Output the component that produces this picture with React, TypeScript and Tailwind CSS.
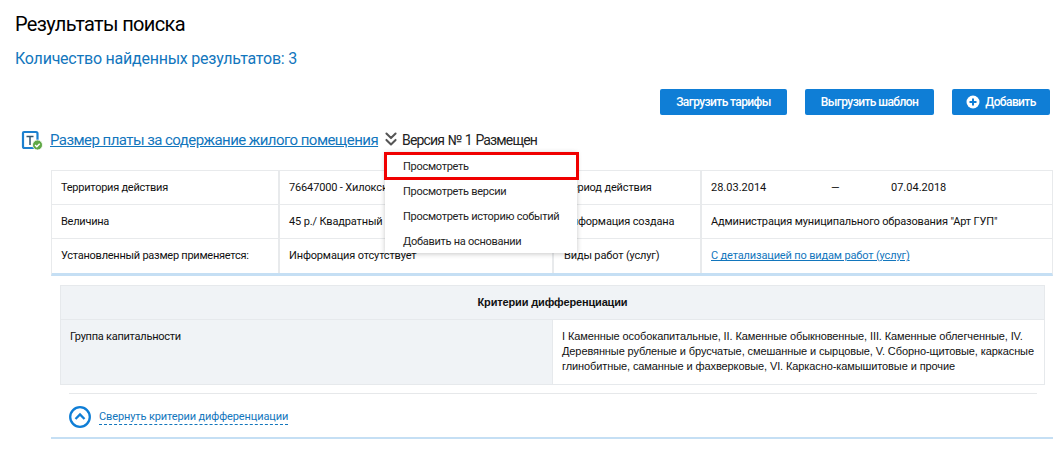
import { ChevronsDown } from "lucide-react";

const rows = [
  ["Территория действия", "76647000 - Хилокский муниципальный район", "Период действия"],
  ["Величина", "45 р./ Квадратный метр общей площади", "Информация создана"],
  ["Установленный размер применяется:", "Информация отсутствует", "Виды работ (услуг)"],
];

function TariffIcon() {
  return (
    <svg width="22" height="21" viewBox="0 0 22 21" className="shrink-0">
      <path d="M3 2h12a1.500 1.500 0 0 1 1.500 1.500V14l-4 4H3.500A1.500 1.500 0 0 1 2 16.500V3a1 1 0 0 1 1-1z" fill="none" stroke="#1c80cf" strokeWidth="2.200" />
      <path d="M5.500 6.500h7M9 6.500v8.500" fill="none" stroke="#33566f" strokeWidth="1.500" />
      <circle cx="16.500" cy="15" r="5" fill="#5fa845" stroke="#fff" strokeWidth="0.800" />
      <path d="M14.100 15l1.700 1.700 2.900-3" fill="none" stroke="#fff" strokeWidth="1.500" />
    </svg>
  );
}

function PlusCircle() {
  return (
    <svg width="14" height="14" viewBox="0 0 14 14">
      <circle cx="7" cy="7" r="6.500" fill="#fff" />
      <path d="M7 3.500v7M3.500 7h7" stroke="#0f7ed6" strokeWidth="2" />
    </svg>
  );
}

function CollapseIcon() {
  return (
    <svg width="22" height="22" viewBox="0 0 22 22" className="shrink-0">
      <circle cx="11" cy="11" r="9.800" fill="none" stroke="#0f7ed6" strokeWidth="2.300" />
      <path d="M6.500 13l4.500-4.500 4.500 4.500" fill="none" stroke="#0f7ed6" strokeWidth="2.300" />
    </svg>
  );
}

export default function App() {
  return (
    <div className="w-[1062px] h-[449px] overflow-hidden bg-white text-[#111] font-['Roboto','Liberation_Sans',sans-serif]">
      <h1 className="pl-[15px] pt-[11px] text-[20px] leading-[26px] font-normal tracking-[-0.65px] text-black">Результаты поиска</h1>
      <p className="pl-[15px] pt-[11px] text-[16px] leading-[22px] tracking-[-0.23px] text-[#1276bd]">Количество найденных результатов: 3</p>

      <div className="flex justify-end gap-[18px] pr-[12px] mt-[19px] text-[12px] font-medium tracking-[-0.6px] text-white">
        <button className="w-[127px] h-[26px] bg-[#0f7ed6] rounded-[2px]">Загрузить тарифы</button>
        <button className="w-[129px] h-[26px] bg-[#0f7ed6] rounded-[2px]">Выгрузить шаблон</button>
        <button className="w-[98px] h-[26px] bg-[#0f7ed6] rounded-[2px] flex items-center justify-center gap-[5px]">
          <PlusCircle />
          Добавить
        </button>
      </div>

      <div className="relative">
        <div className="flex items-center h-[38px] mt-[6px] pl-[21px]">
          <TariffIcon />
          <a className="ml-[7px] text-[15px] leading-[20px] tracking-[-0.55px] text-[#1276bd] underline">Размер платы за содержание жилого помещения</a>
          <ChevronsDown size={22} strokeWidth={2.200} className="ml-[2px] text-[#555] -mt-[3px]" />
          <span className="text-[14px] tracking-[-0.86px] [word-spacing:1px] text-[#222]">Версия № 1 Размещен</span>
        </div>

        <div className="absolute left-[385px] top-[31px] w-[192px] h-[101px] bg-white shadow-[0_1px_5px_rgba(0,0,0,0.22)] z-10 pt-[3px] text-[11px] tracking-[-0.28px] text-[#222]">
          {["Просмотреть", "Просмотреть версии", "Просмотреть историю событий", "Добавить на основании"].map((item) => (
            <div key={item} className="h-[25px] leading-[24px] pl-[18px]">{item}</div>
          ))}
        </div>
        <div className="absolute left-[384px] top-[31px] w-[195px] h-[28px] border-[3px] border-[#f00000] z-20" />

        <div className="ml-[51px] mt-[11px] w-[1002px] border-x border-t border-[#e8eaec] border-b-[3px] border-b-[#c5dff4] text-[11px] tracking-[-0.15px]">
          {rows.map((row, i) => (
            <div key={row[0]} className={"grid grid-cols-[228px_274px_148px_1fr] h-[34px] items-stretch " + (i < 2 ? "border-b border-[#e8eaec]" : "")}>
              <div className="flex items-center pl-[9px] pt-[1px] border-r-2 border-[#e8eaec] tracking-[-0.25px]">{row[0]}</div>
              <div className="flex items-center pl-[9px] pt-[1px] border-r-2 border-[#e8eaec]">{row[1]}</div>
              <div className="flex items-center pl-[10px] pt-[1px] border-r-2 border-[#e8eaec]">{row[2]}</div>
              {i === 0 && (
                <div className="flex items-center pl-[9px] pt-[1px] tracking-normal">
                  <span className="w-[120px]">28.03.2014</span>
                  <span className="w-[60px]">—</span>
                  <span>07.04.2018</span>
                </div>
              )}
              {i === 1 && <div className="flex items-center pl-[9px] pt-[1px]">Администрация муниципального образования "Арт ГУП"</div>}
              {i === 2 && (
                <div className="flex items-center pl-[9px] pt-[1px]">
                  <a className="text-[#1276bd] underline">С детализацией по видам работ (услуг)</a>
                </div>
              )}
            </div>
          ))}
        </div>

        <div className="ml-[60px] mt-[9px] w-[985px] border border-[#e6e9ec] text-[11px]">
          <div className="h-[34px] flex items-center justify-center bg-[#f0f3f6] border-b border-[#e6e9ec] font-bold tracking-[-0.15px] font-['Liberation_Sans',sans-serif]">Критерии дифференциации</div>
          <div className="grid grid-cols-[492px_1fr] h-[64px]">
            <div className="bg-[#f0f3f6] border-r border-[#e6e9ec] pl-[9px] pt-[9px] leading-[15px] tracking-[-0.25px]">Группа капитальности</div>
            <div className="pl-[9px] pr-[4px] pt-[9px] leading-[15px] tracking-[-0.1px] font-['Liberation_Sans',sans-serif]">
              I Каменные особокапитальные, II. Каменные обыкновенные, III. Каменные облегченные, IV. Деревянные рубленые и брусчатые, смешанные и сырцовые, V. Сборно-щитовые, каркасные глинобитные, саманные и фахверковые, VI. Каркасно-камышитовые и прочие
            </div>
          </div>
        </div>

        <div className="ml-[69px] mt-[8px] w-[968px] border-t border-[#e6e8ea] pt-[12px] flex items-center gap-[8px]">
          <CollapseIcon />
          <a className="text-[11px] leading-[15px] tracking-[-0.12px] text-[#1276bd] border-b border-dashed border-[#1276bd]">Свернуть критерии дифференциации</a>
        </div>

        <div className="ml-[51px] mt-[9px] w-[1002px] h-[2px] bg-[#c5dff4]" />
      </div>
    </div>
  );
}
